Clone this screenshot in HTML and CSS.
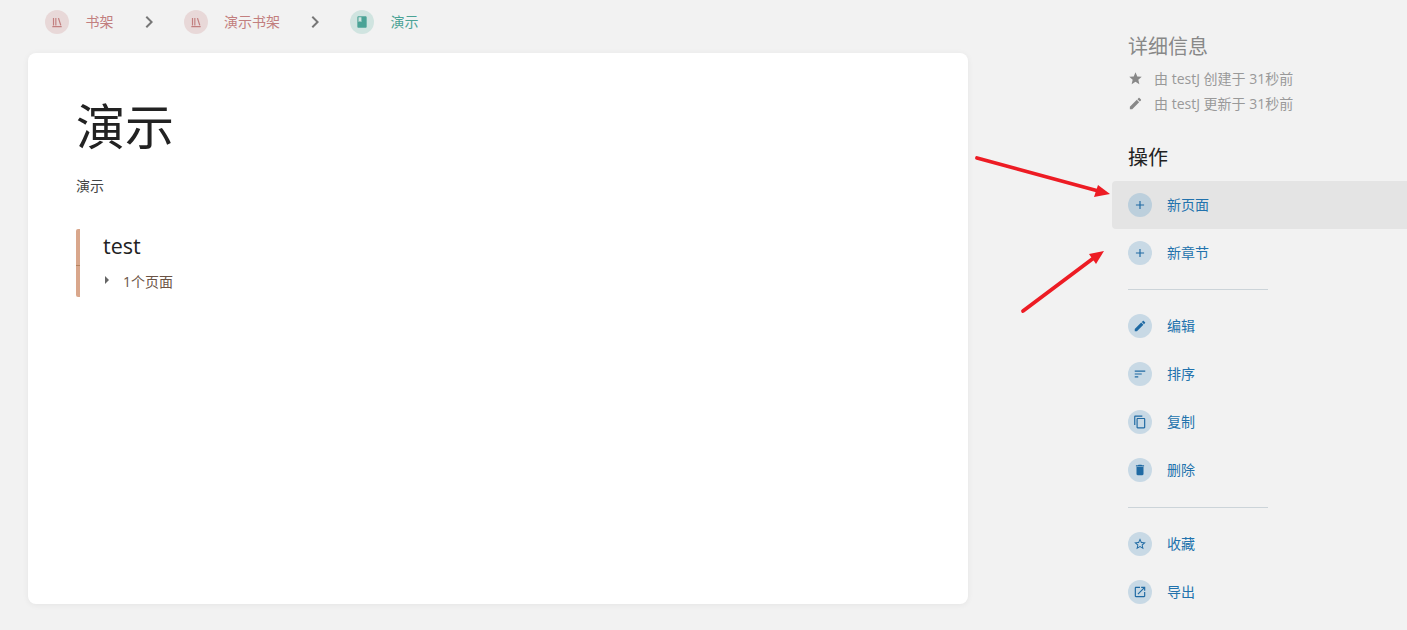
FILE: index.html
```html
<!DOCTYPE html>
<html lang="zh-CN">
<head>
    <meta charset="UTF-8">
    <title>演示</title>
    <link rel="stylesheet" href="styles.css">
</head>
<body>
    <div class="page">
        <main class="content">
            <nav class="breadcrumbs">
                <a class="crumb crumb-shelf">
                    <span class="crumb-icon"><svg viewBox="0 0 24 24"><path d="M5 5h2v13H5zM9 5h2v13H9zM13.5 5.5l2-.5 4 12.5-2 .5zM4 19h16v2H4z"/></svg></span>
                    <span class="crumb-label">书架</span>
                </a>
                <span class="crumb-sep"><svg viewBox="0 0 24 24"><path d="M8.59 16.59L13.17 12 8.59 7.41 10 6l6 6-6 6z"/></svg></span>
                <a class="crumb crumb-shelf">
                    <span class="crumb-icon"><svg viewBox="0 0 24 24"><path d="M5 5h2v13H5zM9 5h2v13H9zM13.5 5.5l2-.5 4 12.5-2 .5zM4 19h16v2H4z"/></svg></span>
                    <span class="crumb-label">演示书架</span>
                </a>
                <span class="crumb-sep"><svg viewBox="0 0 24 24"><path d="M8.59 16.59L13.17 12 8.59 7.41 10 6l6 6-6 6z"/></svg></span>
                <a class="crumb crumb-book">
                    <span class="crumb-icon"><svg viewBox="0 0 24 24"><path d="M18 2H6c-1.1 0-2 .9-2 2v16c0 1.1.9 2 2 2h12c1.1 0 2-.9 2-2V4c0-1.1-.9-2-2-2zM6 4h5v8l-2.5-1.5L6 12V4z"/></svg></span>
                    <span class="crumb-label">演示</span>
                </a>
            </nav>

            <section class="card">
                <h1>演示</h1>
                <p class="desc">演示</p>
                <div class="chapter">
                    <h3>test</h3>
                    <div class="chapter-pages">
                        <svg class="caret" viewBox="0 0 6 8"><path d="M1 0l4 4-4 4z"/></svg>
                        <span>1个页面</span>
                    </div>
                </div>
            </section>
        </main>

        <aside class="sidebar">
            <div class="details">
                <h5 class="details-title">详细信息</h5>
                <div class="meta"><svg viewBox="0 0 24 24"><path d="M12 17.27L18.18 21l-1.64-7.03L22 9.24l-7.19-.61L12 2 9.19 8.63 2 9.24l5.46 4.73L5.82 21z"/></svg><span>由 testJ 创建于 31秒前</span></div>
                <div class="meta"><svg viewBox="0 0 24 24"><path d="M3 17.25V21h3.75L17.81 9.94l-3.75-3.75L3 17.25zM20.71 7.04c.39-.39.39-1.02 0-1.41l-2.34-2.34c-.39-.39-1.02-.39-1.41 0l-1.83 1.83 3.75 3.75 1.83-1.83z"/></svg><span>由 testJ 更新于 31秒前</span></div>
            </div>

            <h5 class="actions-title">操作</h5>
            <a class="action action-hover">
                <span class="action-icon"><svg viewBox="0 0 24 24"><path d="M19 13h-6v6h-2v-6H5v-2h6V5h2v6h6v2z"/></svg></span>
                <span class="action-label">新页面</span>
            </a>
            <a class="action">
                <span class="action-icon"><svg viewBox="0 0 24 24"><path d="M19 13h-6v6h-2v-6H5v-2h6V5h2v6h6v2z"/></svg></span>
                <span class="action-label">新章节</span>
            </a>
            <hr>
            <a class="action">
                <span class="action-icon"><svg viewBox="0 0 24 24"><path d="M3 17.25V21h3.75L17.81 9.94l-3.75-3.75L3 17.25zM20.71 7.04c.39-.39.39-1.02 0-1.41l-2.34-2.34c-.39-.39-1.02-.39-1.41 0l-1.83 1.83 3.75 3.75 1.83-1.83z"/></svg></span>
                <span class="action-label">编辑</span>
            </a>
            <a class="action">
                <span class="action-icon"><svg viewBox="0 0 24 24"><path d="M3 18h6v-2H3v2zM3 6v2h18V6H3zm0 7h12v-2H3v2z"/></svg></span>
                <span class="action-label">排序</span>
            </a>
            <a class="action">
                <span class="action-icon"><svg viewBox="0 0 24 24"><path d="M16 1H4c-1.1 0-2 .9-2 2v14h2V3h12V1zm3 4H8c-1.1 0-2 .9-2 2v14c0 1.1.9 2 2 2h11c1.1 0 2-.9 2-2V7c0-1.1-.9-2-2-2zm0 16H8V7h11v14z"/></svg></span>
                <span class="action-label">复制</span>
            </a>
            <a class="action">
                <span class="action-icon"><svg viewBox="0 0 24 24"><path d="M6 19c0 1.1.9 2 2 2h8c1.1 0 2-.9 2-2V7H6v12zM19 4h-3.5l-1-1h-5l-1 1H5v2h14V4z"/></svg></span>
                <span class="action-label">删除</span>
            </a>
            <hr class="divider-low">
            <a class="action">
                <span class="action-icon"><svg viewBox="0 0 24 24"><path d="M22 9.24l-7.19-.62L12 2 9.19 8.63 2 9.24l5.46 4.73L5.82 21 12 17.27 18.18 21l-1.63-7.03L22 9.24zM12 15.4l-3.76 2.27 1-4.28-3.32-2.88 4.38-.38L12 6.1l1.71 4.04 4.38.38-3.32 2.88 1 4.28L12 15.4z"/></svg></span>
                <span class="action-label">收藏</span>
            </a>
            <a class="action">
                <span class="action-icon"><svg viewBox="0 0 24 24"><path d="M19 19H5V5h7V3H5c-1.11 0-2 .9-2 2v14c0 1.1.89 2 2 2h14c1.1 0 2-.9 2-2v-7h-2v7zM14 3v2h3.59l-9.83 9.83 1.41 1.41L19 6.41V10h2V3h-7z"/></svg></span>
                <span class="action-label">导出</span>
            </a>
        </aside>
    </div>

    <!-- red annotation arrows drawn on top of the screenshot -->
    <svg class="arrows" viewBox="0 0 1407 630">
        <path class="arrow-line" d="M977 158L1102 192"/>
        <path class="arrow-head" d="M1110 194L1098 185L1094 197z"/>
        <path class="arrow-line" d="M1023 311L1095 257"/>
        <path class="arrow-head" d="M1104 251L1089 254L1096 264z"/>
    </svg>
</body>
</html>
```

FILE: styles.css
```css
html, body {
    height: 100%;
}
body {
    margin: 0;
    background-color: #f2f2f2;
    color: #222;
    font-family: "Open Sans", "Noto Sans CJK SC", sans-serif;
    font-size: 14px;
    overflow: hidden;
}
.page {
    display: flex;
    padding-left: 28px;
}
.content {
    width: 940px;
    flex: none;
}

/* breadcrumbs */
.breadcrumbs {
    display: flex;
    align-items: center;
    height: 43px;
    padding-left: 17px;
    margin-bottom: 10px;
}
.crumb {
    display: flex;
    align-items: center;
    gap: 16.5px;
    font-size: 14px;
}
.crumb-label {
    margin-bottom: 2px;
}
.crumb-icon {
    display: flex;
    align-items: center;
    justify-content: center;
    width: 24px;
    height: 24px;
    border-radius: 50%;
}
.crumb-icon svg {
    width: 14px;
    height: 14px;
}
.crumb-shelf {
    color: #c27f7f;
}
.crumb-shelf .crumb-icon {
    background-color: #e8d8d8;
}
.crumb-shelf svg {
    fill: #c27f7f;
}
.crumb-book {
    color: #4ba396;
}
.crumb-book .crumb-icon {
    background-color: #d0e4e0;
}
.crumb-book svg {
    fill: #4ba396;
}
.crumb-sep {
    display: flex;
    justify-content: center;
    width: 70px;
}
.crumb-sep svg {
    width: 24px;
    height: 24px;
    fill: #777;
}

/* main card */
.card {
    box-sizing: border-box;
    height: 551px;
    padding: 35px 48px;
    background-color: #fff;
    border-radius: 8px;
    box-shadow: 0 1px 6px rgba(0, 0, 0, 0.06);
}
.card h1 {
    margin: 0;
    font-size: 49px;
    font-weight: 400;
    line-height: 76px;
    color: #222;
}
.desc {
    margin: 12px 0 0;
    line-height: 20px;
    font-size: 14px;
    color: #444;
}
.chapter {
    margin-top: 33px;
    padding-left: 27px;
    height: 68px;
    background: linear-gradient(#d9a78c 36px, #b5835f 36px, #b5835f 37px, #d9a78c 37px) no-repeat left top / 4px 100%;
    border-radius: 2px;
}
.chapter h3 {
    margin: 0;
    font-size: 21.5px;
    font-weight: 400;
    line-height: 34px;
    color: #222;
}
.chapter-pages {
    display: flex;
    align-items: center;
    margin-top: 9px;
    line-height: 20px;
    color: #6b5344;
}
.caret {
    width: 6px;
    height: 8px;
    margin: 0 13px 4px 1px;
    fill: #666;
}

/* sidebar */
.sidebar {
    box-sizing: border-box;
    flex: none;
    width: 295px;
    margin-left: 144px;
}
.details {
    padding: 33px 16px 0;
}
.details-title, .actions-title {
    margin: 0;
    font-size: 20px;
    font-weight: 400;
    line-height: 28px;
}
.details-title {
    color: #888;
    margin-bottom: 4px;
}
.actions-title {
    margin: 29px 0 9px;
    padding-left: 16px;
    color: #222;
}
.meta {
    display: flex;
    align-items: center;
    gap: 11px;
    height: 25px;
    font-size: 14px;
    color: #999;
}
.meta svg {
    width: 15px;
    height: 15px;
    margin-top: 2px;
    fill: #888;
}
.action {
    display: flex;
    align-items: center;
    gap: 15px;
    height: 48px;
    padding-left: 16px;
    font-size: 14px;
    color: #2272ad;
}
.action-label {
    margin-bottom: 2px;
}
.action-hover {
    background-color: #e4e4e4;
    border-radius: 4px 0 0 4px;
}
.action-icon {
    display: flex;
    align-items: center;
    justify-content: center;
    width: 24px;
    height: 24px;
    border-radius: 50%;
    background-color: #c8d9e5;
}
.action-hover .action-icon {
    background-color: #bccfdc;
}
.action-icon svg {
    width: 14px;
    height: 14px;
    fill: #1f6aa3;
}
.sidebar hr {
    width: 140px;
    height: 1px;
    margin: 12px 0 12px 16px;
    border: 0;
    background-color: #ccd4d9;
}
.sidebar .divider-low {
    margin-top: 13px;
}

/* annotation overlay */
.arrows {
    position: absolute;
    top: 0;
    left: 0;
    width: 1407px;
    height: 630px;
    pointer-events: none;
}
.arrow-line {
    fill: none;
    stroke: #ed1c24;
    stroke-width: 3.8;
    stroke-linecap: round;
}
.arrow-head {
    fill: #ed1c24;
}
```
